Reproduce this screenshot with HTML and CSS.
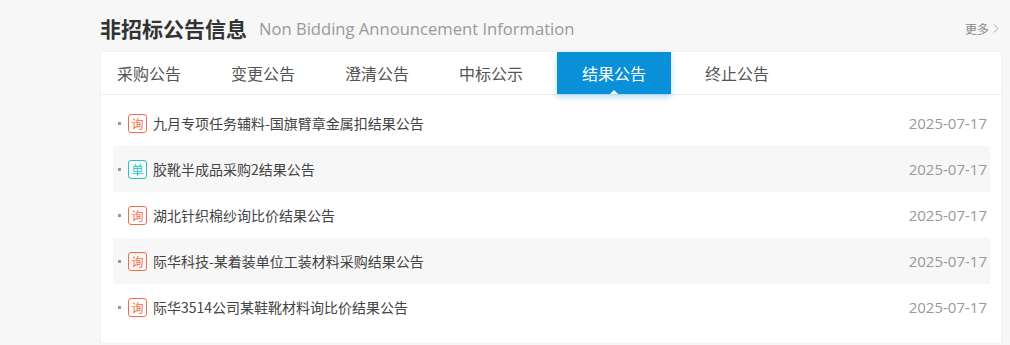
FILE: index.html
```html
<!DOCTYPE html>
<html lang="zh-CN">
<head>
<meta charset="utf-8">
<title>非招标公告信息</title>
<link rel="stylesheet" href="styles.css">
</head>
<body>
<div class="wrap">
  <div class="head">
    <h2 class="title">非招标公告信息</h2>
    <span class="sub">Non Bidding Announcement Information</span>
    <a class="more" href="#">更多<svg width="6" height="9" viewBox="0 0 6 9"><path d="M1 0.5 L5 4.5 L1 8.5" fill="none" stroke="#aaa" stroke-width="1"/></svg></a>
  </div>
  <div class="panel">
    <ul class="tabs">
      <li class="tab">采购公告</li>
      <li class="tab">变更公告</li>
      <li class="tab">澄清公告</li>
      <li class="tab">中标公示</li>
      <li class="tab active">结果公告</li>
      <li class="tab">终止公告</li>
    </ul>
    <ul class="list">
      <li class="row"><i class="dot"></i><span class="badge xun">询</span><span class="name">九月专项任务辅料-国旗臂章金属扣结果公告</span><span class="date">2025-07-17</span></li>
      <li class="row alt"><i class="dot"></i><span class="badge dan">单</span><span class="name">胶靴半成品采购2结果公告</span><span class="date">2025-07-17</span></li>
      <li class="row"><i class="dot"></i><span class="badge xun">询</span><span class="name">湖北针织棉纱询比价结果公告</span><span class="date">2025-07-17</span></li>
      <li class="row alt"><i class="dot"></i><span class="badge xun">询</span><span class="name">际华科技-某着装单位工装材料采购结果公告</span><span class="date">2025-07-17</span></li>
      <li class="row"><i class="dot"></i><span class="badge xun">询</span><span class="name">际华3514公司某鞋靴材料询比价结果公告</span><span class="date">2025-07-17</span></li>
    </ul>
  </div>
</div>
</body>
</html>
```
FILE: styles.css
```css
* { box-sizing: border-box; }
html, body { margin: 0; padding: 0; }
body {
  background: #f7f7f7;
  font-family: "Open Sans", "Noto Sans CJK SC", sans-serif;
  width: 1010px;
  height: 345px;
  overflow: hidden;
}
.wrap { padding: 0 9px 0 100px; }
.head {
  height: 52px;
  display: flex;
  align-items: center;
  padding-top: 4px;
}
.title {
  margin: 0;
  font-size: 21px;
  font-weight: bold;
  color: #333;
  font-family: "Noto Sans CJK SC", sans-serif;
  letter-spacing: 0;
}
.sub {
  margin-left: 12px;
  font-size: 16.6px;
  color: #999;
  font-family: "Open Sans", sans-serif;
}
.more {
  margin-left: auto;
  margin-right: 2px;
  font-size: 12px;
  color: #888;
  text-decoration: none;
  display: flex;
  align-items: center;
  gap: 4px;
  font-family: "Noto Sans CJK SC", sans-serif;
}
.panel {
  background: #fff;
  height: 291px;
  margin-left: 1px;
  box-shadow: 0 0 2px rgba(0,0,0,0.06);
}
.tabs {
  list-style: none;
  margin: 0;
  padding: 0;
  display: flex;
  gap: 18px;
  height: 43px;
  border-bottom: 1px solid #ececec;
}
.tab {
  height: 42px;
  line-height: 42px;
  padding: 0 16px;
  font-size: 16px;
  color: #555;
  font-family: "Noto Sans CJK SC", sans-serif;
  position: relative;
}
.tab.active {
  padding: 0 25px;
  background: #0a90d8;
  color: #fff;
  box-shadow: 0 3px 6px rgba(10,144,216,0.3);
}
.tab.active::after {
  content: "";
  position: absolute;
  left: 50%;
  bottom: 0;
  margin-left: -4px;
  border: 4px solid transparent;
  border-bottom-color: #fff;
  border-top-width: 0;
}
.list {
  list-style: none;
  margin: 0 11px 0 12px;
  padding: 5px 0 0;
}
.row {
  height: 46px;
  display: flex;
  align-items: center;
  padding: 0 3px 0 5px;
  font-family: "Noto Sans CJK SC", sans-serif;
}
.row.alt { background: #f7f7f7; }
.dot {
  width: 3px;
  height: 3px;
  background: #999;
  margin-right: 7px;
}
.badge {
  width: 19px;
  height: 19px;
  border: 1px solid;
  border-radius: 3px;
  font-size: 12px;
  line-height: 17px;
  text-align: center;
  margin-right: 6px;
  font-style: normal;
}
.badge.xun { color: #f26b4b; border-color: #f26b4b; }
.badge.dan { color: #29c0c6; border-color: #29c0c6; }
.name {
  font-size: 14px;
  color: #444;
}
.date {
  margin-left: auto;
  font-size: 15px;
  color: #999;
  font-family: "Open Sans", sans-serif;
}
```
